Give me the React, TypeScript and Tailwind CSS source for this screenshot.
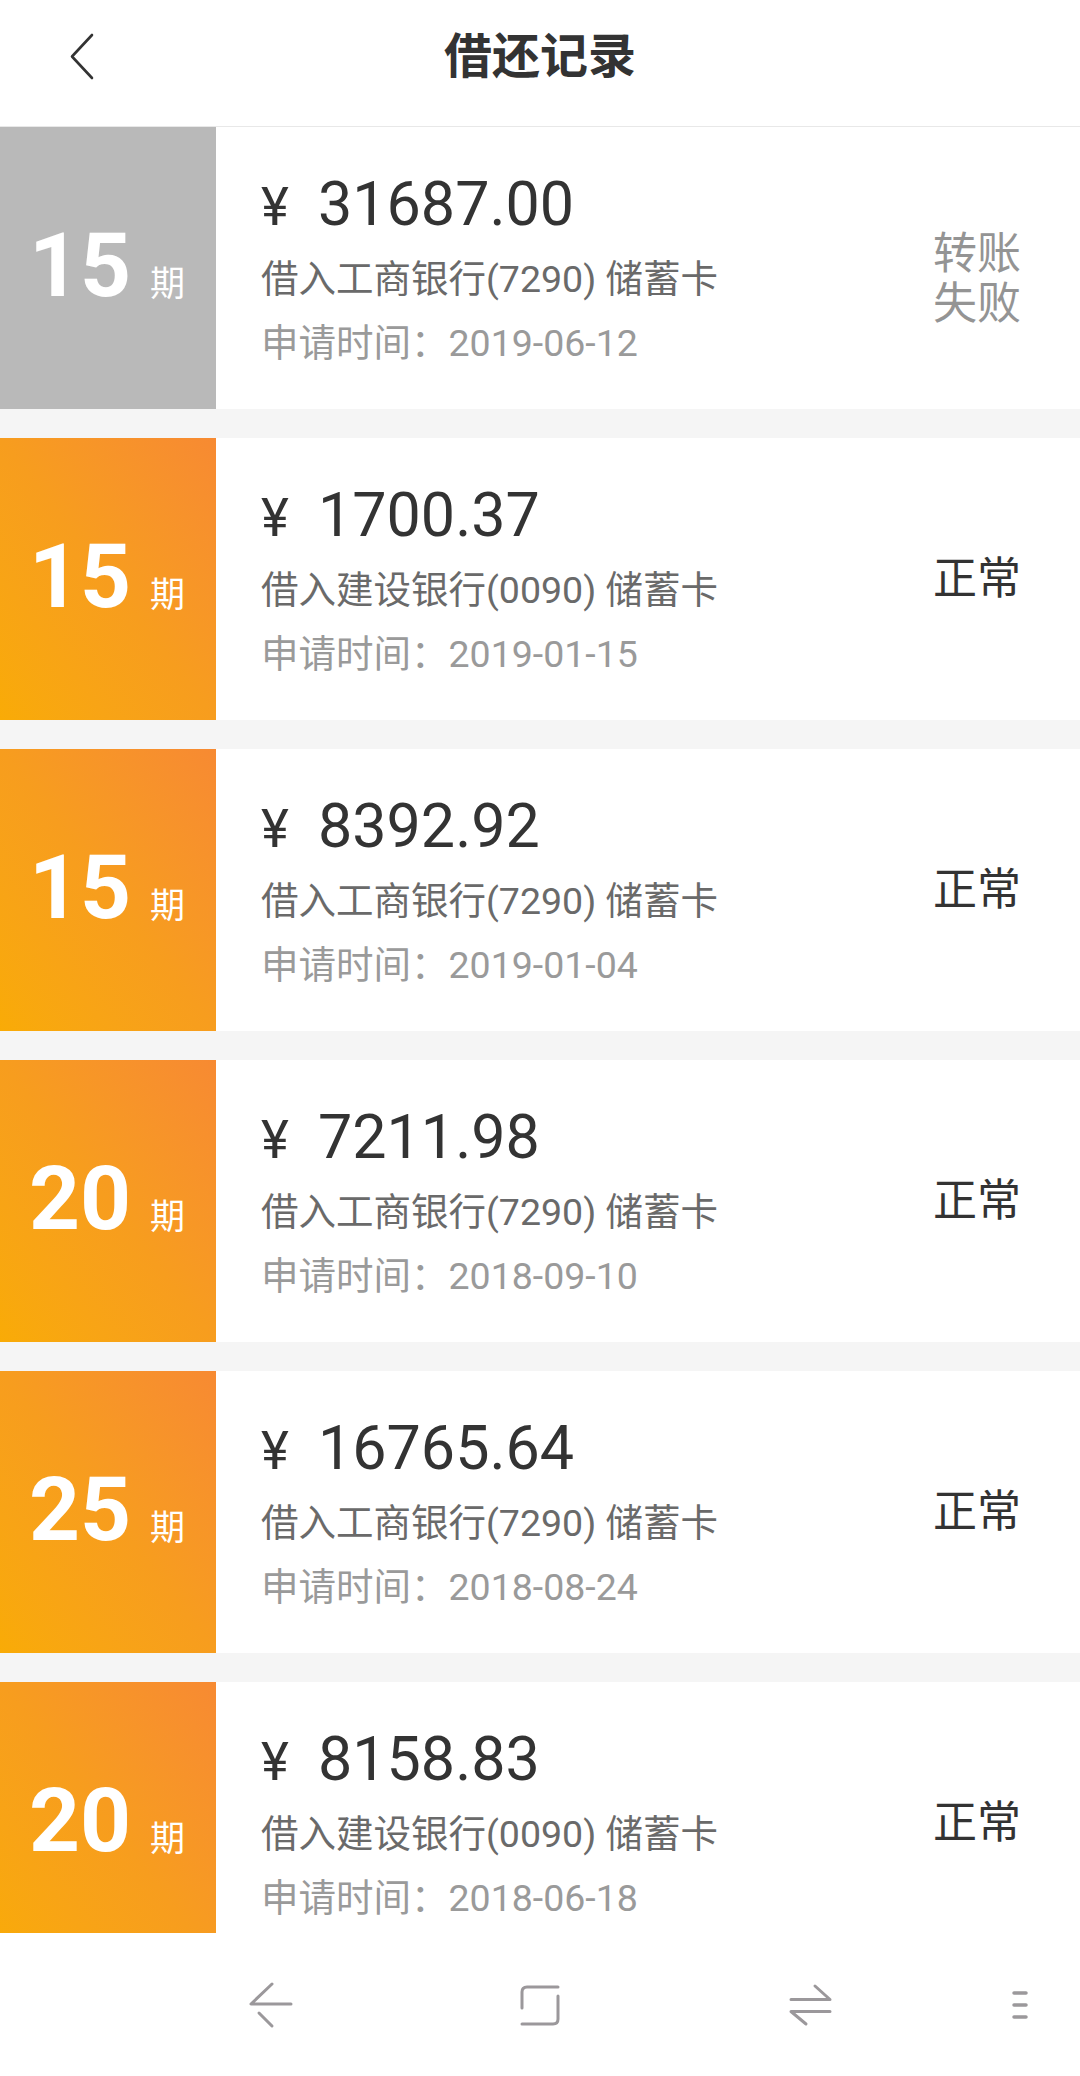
import React from "react";

type Rec = {
  n: string;
  amount: string;
  bank: string;
  date: string;
  status: "ok" | "fail";
};

const records: Rec[] = [
  { n: "15", amount: "31687.00", bank: "借入工商银行(7290) 储蓄卡", date: "2019-06-12", status: "fail" },
  { n: "15", amount: "1700.37", bank: "借入建设银行(0090) 储蓄卡", date: "2019-01-15", status: "ok" },
  { n: "15", amount: "8392.92", bank: "借入工商银行(7290) 储蓄卡", date: "2019-01-04", status: "ok" },
  { n: "20", amount: "7211.98", bank: "借入工商银行(7290) 储蓄卡", date: "2018-09-10", status: "ok" },
  { n: "25", amount: "16765.64", bank: "借入工商银行(7290) 储蓄卡", date: "2018-08-24", status: "ok" },
  { n: "20", amount: "8158.83", bank: "借入建设银行(0090) 储蓄卡", date: "2018-06-18", status: "ok" },
];

function Card({ r }: { r: Rec }) {
  const fail = r.status === "fail";
  return (
    <div className="h-[282px] shrink-0 bg-white flex">
      <div
        className={
          fail
            ? "w-[216px] shrink-0 bg-[#b9b9b9] flex items-center justify-center pb-[5px] pr-[2px]"
            : "w-[216px] shrink-0 bg-linear-to-tr from-[#f9ab06] via-[#f79d1e] to-[#f78a32] flex items-center justify-center pb-[5px] pr-[2px]"
        }
      >
        <div className="flex items-baseline gap-[19px] text-white">
          <span className="text-[89px] font-bold leading-none">{r.n}</span>
          <span className="text-[35px] leading-none">期</span>
        </div>
      </div>
      <div className="flex-1 pl-[45px] pt-[42px]">
        <div className="h-[70px] leading-[70px] text-[#333333] whitespace-nowrap">
          <span className="inline-block w-[57px] text-[53px]">¥</span>
          <span className="text-[61px]">{r.amount}</span>
        </div>
        <div className="mt-[12px] h-[56px] leading-[56px] text-[37.5px] text-[#6a6a6a] whitespace-nowrap">
          {r.bank}
        </div>
        <div className="mt-[8px] h-[56px] leading-[56px] text-[37.5px] text-[#9a9a9a] whitespace-nowrap">
          申请时间：{r.date}
        </div>
      </div>
      <div className="w-[147px] shrink-0 flex items-center">
        {fail ? (
          <div className="mt-[22px] text-[44px] leading-[50px] text-[#949494]">
            <div>转账</div>
            <div>失败</div>
          </div>
        ) : (
          <div className="text-[44px] leading-[50px] text-[#333333]">正常</div>
        )}
      </div>
    </div>
  );
}

export default function App() {
  return (
    <div className="w-[1080px] h-[2076px] bg-[#f5f5f5] flex flex-col overflow-hidden font-['Roboto','Noto_Sans_CJK_SC',sans-serif]">
      <div className="h-[127px] shrink-0 bg-white border-b border-[#e8e8e8] grid grid-cols-[1fr_auto_1fr] items-center pb-[13px]">
        <div className="pl-[69px] flex items-center">
          <svg width="26" height="48" viewBox="0 0 26 48" fill="none">
            <path d="M23 2 L3 23.5 L23 45" stroke="#333333" strokeWidth="2.6" strokeLinecap="round" strokeLinejoin="round" />
          </svg>
        </div>
        <div className="text-[48px] font-bold text-[#333333] leading-none">借还记录</div>
        <div />
      </div>
      <div className="flex-1 overflow-hidden flex flex-col gap-[29px]">
        {records.map((r, i) => (
          <Card key={i} r={r} />
        ))}
      </div>
      <div className="h-[143px] shrink-0 bg-white flex items-center pl-[249px]">
        <svg width="44" height="48" viewBox="0 0 44 48" fill="none">
          <path d="M23 3 L2 23 H42" stroke="#9b989b" strokeWidth="3" strokeLinecap="round" strokeLinejoin="round" />
          <path d="M10 32 L23 45" stroke="#9b989b" strokeWidth="3" strokeLinecap="round" />
        </svg>
        <svg className="ml-[225px]" width="44" height="44" viewBox="0 0 44 44" fill="none">
          <path d="M40 4 H9 Q4 4 4 9 V25" stroke="#9b989b" strokeWidth="3" strokeLinecap="round" />
          <path d="M40 13 V36 Q40 41 35 41 H4" stroke="#9b989b" strokeWidth="3" strokeLinecap="round" />
        </svg>
        <svg className="ml-[227px]" width="44" height="44" viewBox="0 0 44 44" fill="none">
          <path d="M2 16.5 H41 L26 3" stroke="#9b989b" strokeWidth="3" strokeLinecap="round" strokeLinejoin="round" />
          <path d="M41 28.5 H2 L17 41" stroke="#9b989b" strokeWidth="3" strokeLinecap="round" strokeLinejoin="round" />
        </svg>
        <svg className="ml-[179px]" width="16" height="30" viewBox="0 0 16 30" fill="none">
          <path d="M2 3 H14 M2 15 H14 M2 27 H14" stroke="#9b989b" strokeWidth="3.5" strokeLinecap="round" />
        </svg>
      </div>
    </div>
  );
}
